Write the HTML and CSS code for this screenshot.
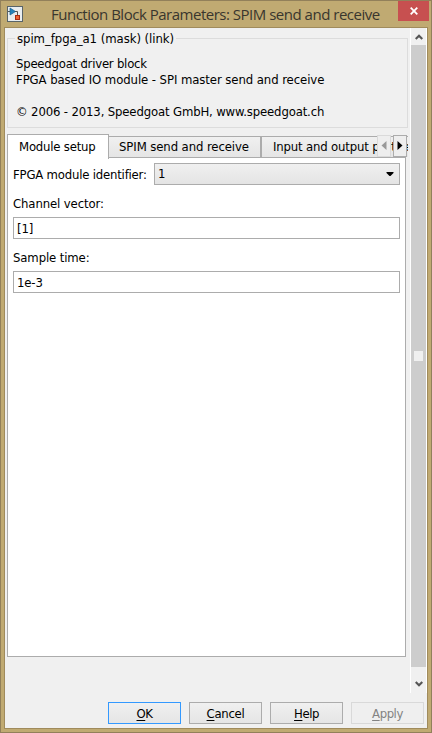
FILE: index.html
```html
<!DOCTYPE html>
<html lang="en">
<head>
<meta charset="utf-8">
<title>Function Block Parameters: SPIM send and receive</title>
<link rel="stylesheet" href="styles.css">
</head>
<body>
<div class="window">
  <header class="titlebar">
    <svg class="app-icon" width="16" height="16" viewBox="0 0 16 16">
      <rect x=".5" y=".5" width="15" height="15" fill="#e9edf0" stroke="#596468"/>
      <path d="M1 5.500h3M8 5.500h2.500V9" fill="none" stroke="#555" stroke-width="1"/>
      <path d="M3 2l5.500 3.500L3 9z" fill="#2685bd" stroke="#175f8d" stroke-width=".7"/>
      <rect x="8.500" y="9.500" width="4" height="4" fill="#ef6334" stroke="#a92c13"/>
    </svg>
    <h1 class="title"><span>Function Block Parameters: SPIM send and receive</span></h1>
    <button class="close" aria-label="Close"><svg width="8" height="8" viewBox="0 0 8 8"><path d="M.7.7l6.600 6.600M7.300.7L.7 7.300" stroke="#fff" stroke-width="1.800"/></svg></button>
  </header>
  <main class="client">
    <div class="scroll-area">
      <div class="content">
        <section class="mask">
          <h2 class="legend"><span class="t-legend">spim_fpga_a1 (mask) (link)</span></h2>
          <p><span class="t-driver">Speedgoat driver block</span></p>
          <p><span class="t-desc">FPGA based IO module - SPI master send and receive</span></p>
          <p class="copyright"><span class="t-copy">© 2006 - 2013, Speedgoat GmbH, www.speedgoat.ch</span></p>
        </section>
        <nav class="tabs">
          <div class="tab active"><span class="t-tab1">Module setup</span></div>
          <div class="tab second"><span class="t-tab2">SPIM send and receive</span></div>
          <div class="tab third"><span class="t-tab3">Input and output port setup</span></div>
          <div class="tab-scroll">
            <button class="step disabled" aria-label="Previous tabs"><svg width="6" height="10" viewBox="0 0 6 10"><path d="M5.500 0v9L.5 4.500z" fill="#999"/></svg></button>
            <button class="step" aria-label="Next tabs"><svg width="6" height="10" viewBox="0 0 6 10"><path d="M.5 0v9l5-4.500z" fill="#000"/></svg></button>
          </div>
        </nav>
        <section class="pane">
          <div class="row"><label class="t-ident">FPGA module identifier:</label>
            <div class="combo"><span>1</span><svg width="8" height="5" viewBox="0 0 8 5"><path d="M.5 0h7v1L4.500 4h-1L.5 1z" fill="#000"/></svg></div></div>
          <label class="field-label"><span class="t-channel">Channel vector:</span></label>
          <div class="field"><span>[1]</span></div>
          <label class="field-label"><span class="t-sample">Sample time:</span></label>
          <div class="field"><span class="t-value">1e-3</span></div>
        </section>
      </div>
      <div class="scrollbar">
        <svg class="arrow up" width="8" height="6" viewBox="0 0 8 6"><path d="M.7 5L4 1.700 7.300 5" fill="none" stroke="#555" stroke-width="2.200"/></svg>
        <div class="thumb"><i></i></div>
        <svg class="arrow down" width="8" height="6" viewBox="0 0 8 6"><path d="M.7 1L4 4.300 7.300 1" fill="none" stroke="#555" stroke-width="2.200"/></svg>
      </div>
    </div>
    <footer class="buttons">
      <button class="button default"><span class="t-ok"><u>O</u>K</span></button>
      <button class="button"><span class="t-cancel"><u>C</u>ancel</span></button>
      <button class="button"><span class="t-help"><u>H</u>elp</span></button>
      <button class="button off"><span class="t-apply"><u>A</u>pply</span></button>
    </footer>
  </main>
</div>
</body>
</html>
```
FILE: styles.css
```css
* { box-sizing: border-box; }
body { margin: 0; font: 13px/16px "DejaVu Sans Condensed", "DejaVu Sans", sans-serif; font-stretch: condensed; letter-spacing: -.15px; color: #000; }
h1, h2, p { margin: 0; font-size: inherit; font-weight: normal; }
button { padding: 0; font: inherit; letter-spacing: inherit; color: inherit; border-radius: 0; }
svg { display: block; flex: none; }
span, label { white-space: nowrap; }
.t-legend { letter-spacing: -.05px; }
.t-driver { letter-spacing: -.23px; }
.t-tab1, .t-ident { letter-spacing: -.2px; }
.t-channel, .t-sample { letter-spacing: -.12px; }
.t-desc { letter-spacing: -.08px; }
.t-tab2 { letter-spacing: -.1px; }
.t-tab3 { letter-spacing: -.16px; }
.t-cancel { letter-spacing: -.3px; }
.t-ok, .t-help, .t-apply { letter-spacing: -.45px; }
.window { width: 432px; height: 733px; padding: 0 3px 3px; border: 1px solid #92805a; background: #c0aa72; }
.titlebar { display: flex; height: 26px; padding-left: 3px; align-items: flex-start; }
.app-icon { margin-top: 5px; }
.title { flex: 1; padding: 3px 0 0 28px; font: 15px/21px "Open Sans", "Noto Sans", sans-serif; letter-spacing: -.49px; color: #39362e; }
.close { display: flex; width: 31px; height: 20px; margin-right: -1px; align-items: center; justify-content: center; border: 0; background: #c75050; }
.client { height: 702px; border: 1px solid #a08b5c; background: #f0f0f0; }
.scroll-area { display: flex; height: 665px; }
.content { width: 405px; padding: 10px 2px 0; }
.mask { width: 401px; height: 90px; border: 1px solid #dcdcdc; padding-left: 8px; }
.legend { width: max-content; height: 16px; margin: -8px 0 9px -1px; padding: 0 2px; background: #f0f0f0; }
.copyright { margin-top: 16px; }
.tabs { position: relative; display: flex; height: 23px; margin-top: 6px; align-items: flex-end; overflow: visible; }
.tab { height: 21px; padding: 2px 0 0 11px; border: 1px solid #acacac; border-bottom: 0; background: linear-gradient(#f0f0f0, #e5e5e5); overflow: hidden; }
.active { position: relative; z-index: 1; width: 102px; height: 25px; margin-bottom: -2px; padding-top: 4px; background: #fff; }
.second { width: 153px; margin-left: -1px; padding-left: 10px; }
.third { width: 147px; border-right: 0; }
.tab-scroll { position: absolute; z-index: 2; right: 1px; top: 1px; display: flex; gap: 2px; }
.step { display: flex; width: 14px; height: 22px; align-items: center; justify-content: center; border: 1px solid #acacac; background: #eee; }
.disabled { border-color: #dadada; }
.pane { width: 399px; height: 500px; padding: 5px 5px 0; border: 1px solid #acacac; background: #fff; }
.row { display: flex; height: 22px; align-items: center; }
.t-ident { padding-top: 1px; }
.combo { display: flex; width: 246px; height: 22px; margin-left: auto; padding: 0 5px 0 3px; align-items: center; justify-content: space-between; border: 1px solid #acacac; background: linear-gradient(#f0f0f0, #e4e4e4); }
.field-label { display: block; height: 32px; padding-top: 11px; }
.field { width: 387px; height: 22px; padding: 3px; border: 1px solid #acacac; background: #fff; }
.scrollbar { display: flex; flex-direction: column; width: 17px; height: 665px; border: solid #fff; border-width: 0 1px; align-items: center; }
.up { margin: 6px 0 5px; }
.down { margin-top: 14px; }
.thumb { display: flex; width: 15px; height: 622px; align-items: center; justify-content: center; background: #cdcdcd; }
.thumb i { width: 9px; height: 10px; background: #f0f0f0; }
.buttons { display: flex; gap: 8px; padding: 9px 0 0 103px; }
.button { width: 73px; height: 22px; flex: none; padding-top: 1px; border: 1px solid #acacac; background: linear-gradient(#f0f0f0, #e5e5e5); }
.default { border-color: #3399ff; }
.off { color: #838383; border-color: #d9d9d9; background: #efefef; }
u { text-underline-offset: 2px; }
```
